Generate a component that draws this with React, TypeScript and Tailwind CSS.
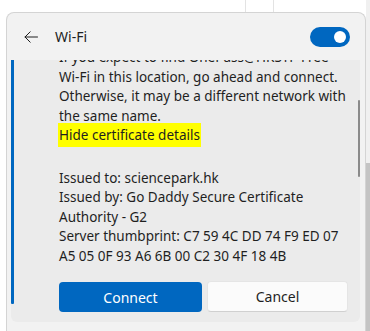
import React from "react";

const font = { fontFamily: '"Noto Sans", "Open Sans", Arial, sans-serif' };

function BackArrow() {
  return (
    <svg width="14" height="12" viewBox="0 0 14 12" fill="none" className="text-[#1f1f1f]">
      <path d="M13.5 6H1M6.2 0.8L1 6l5.2 5.2" stroke="currentColor" strokeWidth="1" strokeLinecap="round" strokeLinejoin="round" />
    </svg>
  );
}

function Toggle() {
  return (
    <div className="w-[40px] h-[20px] rounded-full bg-[#0067c0] flex items-center justify-end pr-[4px]">
      <div className="w-[12px] h-[12px] rounded-full bg-white" />
    </div>
  );
}

export default function App() {
  return (
    <div className="w-[370px] h-[331px] overflow-hidden bg-white flex text-[#1f1f1f]" style={font}>
      {/* page behind the flyout */}
      <div className="w-[366px] flex flex-col">
        <div className="h-[12px] flex shrink-0">
          <div className="w-[245px]" />
          <div className="w-[28px] border-l border-[#e3e3e3]" />
          <div className="flex-1 border-l border-[#e3e3e3]" />
        </div>

        {/* flyout panel */}
        <div className="ml-[6px] flex-1 rounded-t-[8px] border border-b-0 border-[#d4d4d4] bg-[#f2f2f2] flex flex-col">
          <div className="h-[47px] shrink-0 flex items-center pl-[17px] pr-[15px]">
            <BackArrow />
            <span className="ml-[17px] text-[14px] leading-none">Wi-Fi</span>
            <div className="flex-1" />
            <Toggle />
          </div>

          <div className="relative ml-[4px] mr-[5px] h-[262px] rounded-b-[6px] bg-[#ebebeb] overflow-hidden flex">
            <div className="w-[3px] h-[244px] bg-[#0067c0] rounded-b-[1px] shrink-0" />
            <div className="flex-1 pl-[45px] pr-[10px] flex flex-col">
              <div className="-mt-[12px] text-[13.5px] leading-[19.5px] whitespace-nowrap">
                <div>If you expect to find OnePass@HKSTP Free</div>
                <div>Wi-Fi in this location, go ahead and connect.</div>
                <div>Otherwise, it may be a different network with</div>
                <div>the same name.</div>
                <div>
                  <span className="bg-[#ffff00] pt-[3px] pb-[3px] px-[1px] -ml-[1px]">Hide certificate details</span>
                </div>
                <div className="mt-[23px]">Issued to: sciencepark.hk</div>
                <div>Issued by: Go Daddy Secure Certificate</div>
                <div>Authority - G2</div>
                <div>Server thumbprint: C7 59 4C DD 74 F9 ED 07</div>
                <div>A5 05 0F 93 A6 6B 00 C2 30 4F 18 4B</div>
              </div>

              <div className="mt-[16px] flex gap-[5px] pr-[2px]">
                <button className="w-[143px] h-[30px] rounded-[4px] bg-[#0067c0] text-white text-[14px]">
                  Connect
                </button>
                <button className="w-[141px] h-[31px] -mt-[1px] rounded-[4px] bg-[#fbfbfb] border border-[#e5e5e5] border-b-[#d0d0d0] text-[14px]">
                  Cancel
                </button>
              </div>
            </div>

            {/* overlay scrollbar */}
            <div className="absolute right-0 top-[40px] w-[2px] h-[77px] rounded-full bg-[#8a8a8a]" />
          </div>
        </div>
      </div>

      {/* window edge on the right */}
      <div className="flex-1 flex flex-col bg-[#f0f0f0]">
        <div className="h-[163px]" />
        <div className="flex-1 bg-[#c4c4c4]" />
      </div>
    </div>
  );
}
